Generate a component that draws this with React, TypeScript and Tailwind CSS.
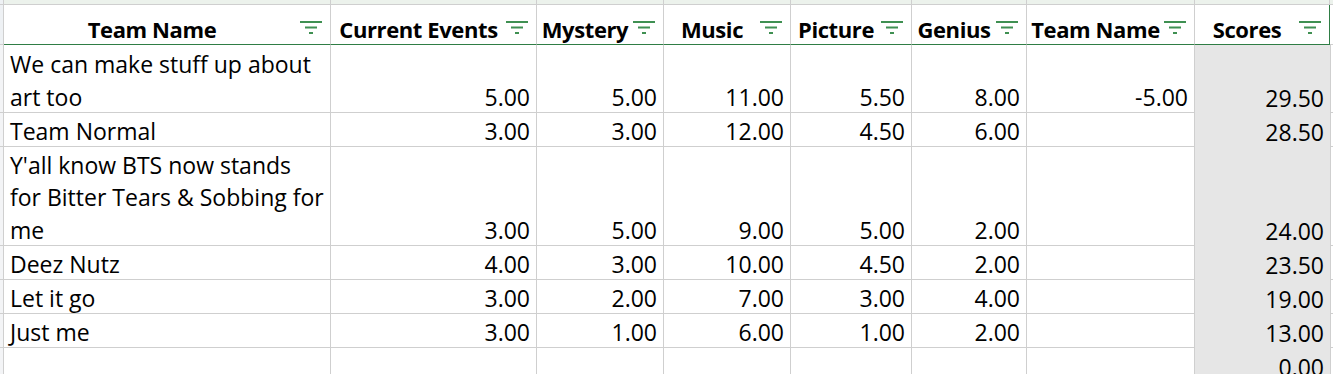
import React from "react";

const widths = ["w-[327px]", "w-[206px]", "w-[127px]", "w-[127px]", "w-[121px]", "w-[115px]", "w-[168px]", "w-[135px]"];
const headers = ["Team Name", "Current Events", "Mystery", "Music", "Picture", "Genius", "Team Name", "Scores"];

type Row = { name: string[]; vals: string[]; h: string };

const rows: Row[] = [
  { name: ["We can make stuff up about", "art too"], vals: ["5.00", "5.00", "11.00", "5.50", "8.00", "-5.00", "29.50"], h: "h-[68px]" },
  { name: ["Team Normal"], vals: ["3.00", "3.00", "12.00", "4.50", "6.00", "", "28.50"], h: "h-[34px]" },
  { name: ["Y'all know BTS now stands", "for Bitter Tears & Sobbing for", "me"], vals: ["3.00", "5.00", "9.00", "5.00", "2.00", "", "24.00"], h: "h-[99px]" },
  { name: ["Deez Nutz"], vals: ["4.00", "3.00", "10.00", "4.50", "2.00", "", "23.50"], h: "h-[34px]" },
  { name: ["Let it go"], vals: ["3.00", "2.00", "7.00", "3.00", "4.00", "", "19.00"], h: "h-[34px]" },
  { name: ["Just me"], vals: ["3.00", "1.00", "6.00", "1.00", "2.00", "", "13.00"], h: "h-[34px]" },
  { name: [""], vals: ["", "", "", "", "", "", "0.00"], h: "h-[34px]" },
];

function FilterIcon() {
  return (
    <svg width="22" height="14" viewBox="0 0 22 14" className="shrink-0">
      <rect x="0" y="0" width="22" height="2" fill="#3f9052" />
      <rect x="5" y="5.5" width="12" height="2" fill="#3f9052" />
      <rect x="9" y="11" width="4" height="2" fill="#3f9052" />
    </svg>
  );
}

export default function App() {
  return (
    <div className="w-[1333px] h-[374px] overflow-hidden bg-white text-black font-['Open_Sans',_sans-serif] text-[23px] leading-[32.5px]">
      {/* top strip */}
      <div className="flex h-[5px]">
        <div className="w-[4px] shrink-0 border-r border-b border-[#cfcfcf] bg-[#eef1f4]" />
        {widths.map((w, i) => (
          <div key={i} className={`${w} shrink-0 border-r border-b border-[#cfcfcf] bg-[#ecf2ec]`} />
        ))}
        <div className="flex-1 border-b border-[#cfcfcf] bg-[#ecf2ec]" />
      </div>
      {/* header */}
      <div className="flex h-[40px]">
        <div className="w-[4px] shrink-0 border-r border-b border-[#cfcfcf] bg-[#eef1f4]" />
        {widths.map((w, i) => (
          <div
            key={i}
            className={`${w} shrink-0 flex items-end border-b border-b-[#2f7d45] border-r ${i === 7 ? "border-r-[#2f7d45]" : "border-r-[#cfcfcf]"}`}
          >
            <div className="flex-1 min-w-0 text-center font-bold whitespace-nowrap text-[22px] leading-[29px] tracking-[-0.4px]">
              {headers[i]}
            </div>
            <div className="w-[22px] mr-[8px] h-full flex items-start pt-[16px]">
              <FilterIcon />
            </div>
          </div>
        ))}
        <div className="flex-1 border-b border-[#cfcfcf]" />
      </div>
      {/* data rows */}
      {rows.map((r, ri) => (
        <div key={ri} className={`flex ${r.h}`}>
          <div className="w-[4px] shrink-0 border-r border-b border-[#cfcfcf] bg-[#f3f4f6]" />
          <div className={`${widths[0]} shrink-0 border-r border-b border-[#cfcfcf] flex flex-col justify-end pl-[6px] whitespace-nowrap`}>
            {r.name.map((l, li) => (
              <div key={li} className="relative top-[1px]">
                {l || "\u00a0"}
              </div>
            ))}
          </div>
          {r.vals.map((v, vi) => (
            <div
              key={vi}
              className={`${widths[vi + 1]} shrink-0 flex items-end justify-end pr-[6px] ${
                vi === 6 ? "bg-[#e6e6e6]" : "border-r border-b border-[#cfcfcf]"
              }`}
            >
              <span className="relative top-[1px]">{v}</span>
            </div>
          ))}
          <div className="flex-1 border-l border-b border-[#cfcfcf]" />
        </div>
      ))}
    </div>
  );
}
